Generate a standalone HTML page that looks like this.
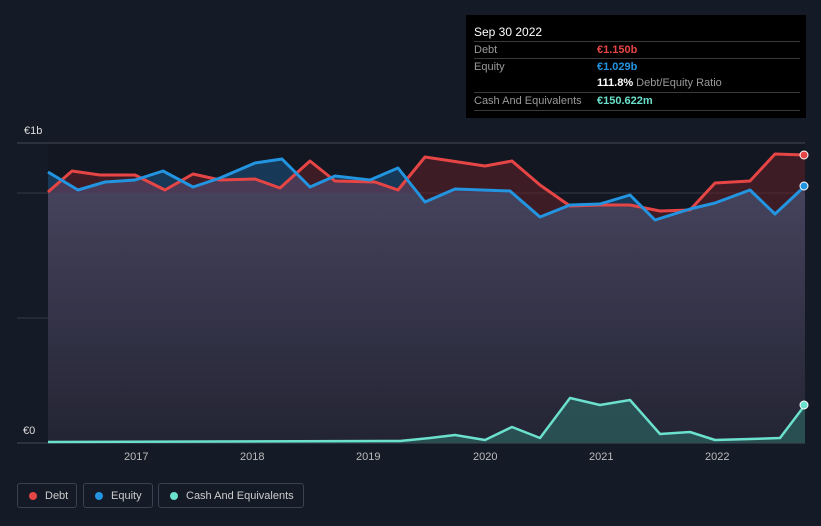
<!DOCTYPE html>
<html><head><style>
body{margin:0;width:821px;height:526px;background:#151b26;font-family:"Liberation Sans",sans-serif;overflow:hidden;position:relative}
.tt{position:absolute;left:466px;top:15px;width:340px;height:103px;background:#000;color:#fff;font-size:11px}
.row{position:absolute;left:8px;width:326px;border-top:1px solid #3a3a3a;height:17px;line-height:17px;color:#9a9a9a}
.row span{position:absolute;left:123px}
.lg{position:absolute;top:483px;height:25px;border:1px solid #3a4150;border-radius:3px;color:#ccc;font-size:11px;line-height:25px;box-sizing:border-box;padding-left:27px}
.lg i{position:absolute;left:11px;top:8px;width:8px;height:8px;border-radius:50%}
.ax{position:absolute;color:#ddd;font-size:11px}
</style></head><body>
<svg width="821" height="526" style="position:absolute;left:0;top:0">
<defs>
<linearGradient id="g" x1="0" y1="0" x2="0" y2="1"><stop offset="0" stop-color="#45425c"/><stop offset="1" stop-color="#232433"/></linearGradient>
<clipPath id="cd"><polygon points="48,192 72,171 100,175 135,175 165,190 193,174 220,180 255,179 280,188 310,161 335,181 375,182 398,190 425,157 485,166 512,161 540,185 570,206 600,205 630,205 660,211 690,210 715,183 750,181 775,154 805,155 805,443 48,443"/></clipPath>
<clipPath id="ce"><polygon points="48,172 78,190 105,182 135,180 163,171 193,187 220,178 255,163 282,159 310,187 335,176 370,180 398,168 425,202 455,189 510,191 540,217 570,205 600,204 630,195 655,220 690,209 715,203 750,190 775,214 805,186 805,443 48,443"/></clipPath>
</defs>
<rect x="48" y="143" width="757" height="300" fill="#121722"/>
<line x1="17" y1="143" x2="805" y2="143" stroke="#444a55"/>
<line x1="17" y1="193" x2="805" y2="193" stroke="#333845"/>
<line x1="17" y1="318" x2="805" y2="318" stroke="#333845"/>
<line x1="17" y1="443" x2="805" y2="443" stroke="#444a55"/>
<rect x="48" y="140" width="757" height="303" clip-path="url(#cd)" fill="#6a2228" opacity="0.5"/>
<rect x="48" y="140" width="757" height="303" clip-path="url(#ce)" fill="#1b5a8a" opacity="0.5"/>
<g clip-path="url(#cd)"><rect x="48" y="140" width="757" height="303" clip-path="url(#ce)" fill="#4a3a55"/></g>
<g clip-path="url(#cd)"><rect x="48" y="193" width="757" height="250" clip-path="url(#ce)" fill="url(#g)"/></g>
<polygon points="48,442 400,441 430,438 455,435 485,440 512,427 540,438 570,398 600,405 630,400 660,434 690,432 715,440 750,439 780,438 805,405 805,443 48,443" fill="#2a5a5a" opacity="0.8"/>
<polyline fill="none" stroke="#e64545" stroke-width="3" stroke-linejoin="round" points="48,192 72,171 100,175 135,175 165,190 193,174 220,180 255,179 280,188 310,161 335,181 375,182 398,190 425,157 485,166 512,161 540,185 570,206 600,205 630,205 660,211 690,210 715,183 750,181 775,154 805,155"/>
<polyline fill="none" stroke="#2394e0" stroke-width="3" stroke-linejoin="round" points="48,172 78,190 105,182 135,180 163,171 193,187 220,178 255,163 282,159 310,187 335,176 370,180 398,168 425,202 455,189 510,191 540,217 570,205 600,204 630,195 655,220 690,209 715,203 750,190 775,214 805,186"/>
<polyline fill="none" stroke="#6be0cc" stroke-width="2.5" stroke-linejoin="round" points="48,442 400,441 430,438 455,435 485,440 512,427 540,438 570,398 600,405 630,400 660,434 690,432 715,440 750,439 780,438 805,405"/>
<circle cx="804" cy="155" r="4" fill="#e64545" stroke="#fff" stroke-width="1"/>
<circle cx="804" cy="186" r="4" fill="#2394e0" stroke="#fff" stroke-width="1"/>
<circle cx="804" cy="405" r="4" fill="#6be0cc" stroke="#fff" stroke-width="1"/>
</svg>
<div class="ax" style="left:24px;top:125px">€1b</div>
<div class="ax" style="left:23px;top:425px">€0</div>
<div class="ax" style="left:124px;top:451px;color:#bbb">2017</div>
<div class="ax" style="left:240px;top:451px;color:#bbb">2018</div>
<div class="ax" style="left:356px;top:451px;color:#bbb">2019</div>
<div class="ax" style="left:473px;top:451px;color:#bbb">2020</div>
<div class="ax" style="left:589px;top:451px;color:#bbb">2021</div>
<div class="ax" style="left:705px;top:451px;color:#bbb">2022</div>
<div class="tt">
<div style="position:absolute;left:8px;top:10px;font-size:12px">Sep 30 2022</div>
<div class="row" style="top:26px">Debt<span style="color:#e64545;font-weight:bold">€1.150b</span></div>
<div class="row" style="top:43px">Equity<span style="color:#2394e0;font-weight:bold">€1.029b</span></div>
<div class="row" style="top:60px;border-top:none"><span style="color:#fff"><b>111.8%</b> <span style="position:static;color:#9a9a9a">Debt/Equity Ratio</span></span></div>
<div class="row" style="top:77px">Cash And Equivalents<span style="color:#6be0cc;font-weight:bold">€150.622m</span></div>
<div class="row" style="top:95px;height:0"></div>
</div>
<div class="lg" style="left:17px;width:60px"><i style="background:#e64545"></i>Debt</div>
<div class="lg" style="left:83px;width:70px"><i style="background:#2394e0"></i>Equity</div>
<div class="lg" style="left:158px;width:146px"><i style="background:#6be0cc"></i>Cash And Equivalents</div>
</body></html>
